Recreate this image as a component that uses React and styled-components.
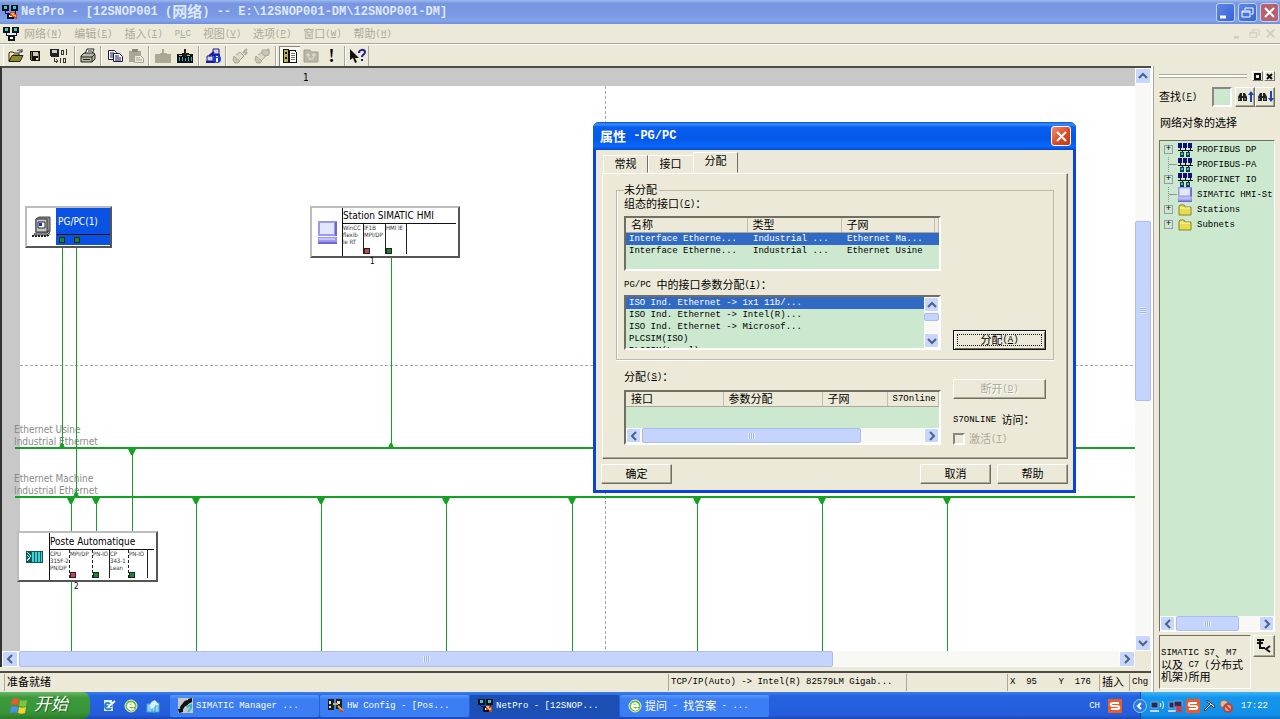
import React, { useState } from "react";
import styled, { createGlobalStyle, css } from "styled-components";

const GlobalStyle = createGlobalStyle`
  * { box-sizing: border-box; }
  body {
    margin: 0;
    overflow: hidden;
    background: #ece9d8;
    color: #000;
    font: 9px/12px "Liberation Mono", "Noto Sans CJK SC", monospace;
  }
  button, input {
    font: inherit;
    color: inherit;
    padding: 0;
    margin: 0;
    border: 0;
    border-radius: 0;
  }
  button { background: none; white-space: nowrap; }
  svg { display: block; flex: none; }
`;

/* ---------- text ---------- */
const Han = styled.span`
  font-family: "Noto Sans CJK SC", sans-serif;
  font-size: ${(p) => p.$size || 11}px;
  line-height: 8px;
  vertical-align: -2px;
`;

// Chinese runs are set larger than latin ones, "_X" underlines X
function mix(text, size) {
  return text
    .split(/([\u3000-\u9fff\uff00-\uffef]+|_.)/)
    .filter(Boolean)
    .map((part, i) => {
      if (part[0] === "_") return <u key={i}>{part[1]}</u>;
      if (/[\u3000-\u9fff\uff00-\uffef]/.test(part))
        return (
          <Han key={i} $size={size}>
            {part}
          </Han>
        );
      return part;
    });
}

/* ---------- icons ---------- */
const NetIcon = ({ size = 16, flash }) => (
  <svg width={size} height={size} viewBox="0 0 16 16" shapeRendering="crispEdges">
    <path d="M0 1h7v6H0zM9 1h7v6H9zM5 10h7v5H5z" fill="#111" />
    <path d="M2 2h3v3H2zM11 2h3v3h-3z" fill="#3cc8c8" />
    <path d="M7 11h3v2H7z" fill="#fff" />
    <path d="M3 7v2h10V7M8 9v1" stroke="#10106a" fill="none" />
    {flash && <path d="M8 8h5v2h2v5h-2l-2-2-3-1z" fill="#e04030" />}
    {flash && <path d="M9 9h3v2h2v2l-3-1z" fill="#f6c040" />}
  </svg>
);

const OpenIcon = () => (
  <svg width="16" height="16" viewBox="0 0 16 16">
    <path d="M1 13V5l1-1h3l1 1h5v2H5z" fill="#f4f08a" stroke="#222" />
    <path d="M1 13.500l3-6h11l-3 6z" fill="#8f8a28" stroke="#222" />
    <path d="M9 3c2-2 4-1 5 1m0-3v3h-3" stroke="#222" fill="none" />
  </svg>
);

const SaveIcon = () => (
  <svg width="12" height="12" viewBox="0 0 12 12" shapeRendering="crispEdges">
    <path d="M1 1h10v10H2l-1-1z" fill="#111" />
    <path d="M2 2h1v8H2zM9 3h1v7H9z" fill="#77781c" />
    <path d="M4 2h5v4H4z" fill="#c8c8b8" />
    <path d="M7 8h2v2H7z" fill="#ddd" />
  </svg>
);

const CompileIcon = () => (
  <svg width="17" height="16" viewBox="0 0 17 16" shapeRendering="crispEdges">
    <path d="M0 1h9v8H1L0 8z" fill="#222" />
    <path d="M2 2h5v3H2z" fill="#ccc" />
    <path d="M11 2h2v4h-2zM16 1v6M10 10v5M13 10h2v4h-2z" stroke="#333" fill="none" />
    <path d="M4 10v3h4M6 11l2 2-2 2" stroke="#333" fill="none" />
  </svg>
);

const PrintIcon = () => (
  <svg width="16" height="16" viewBox="0 0 16 16">
    <path d="M5 6l2-5h7l-2 5" fill="#fff" stroke="#222" />
    <path d="M1 8l3-3h10l1 2v4l-3 3H1z" fill="#b8b8a8" stroke="#222" />
    <path d="M1 9h11l3-3M12 9v5M3 11.500h7M8 3h4" stroke="#222" fill="none" />
    <path d="M7 10h3v1H7z" fill="#d8c820" />
  </svg>
);

const CopyIcon = () => (
  <svg width="16" height="16" viewBox="0 0 16 16">
    <g fill="#fff" stroke="#16164e">
      <path d="M1.500 2.500h6l2 2v7h-8zM3 5h4M3 7h4M3 9h4" />
      <path d="M6.500 5.500h6l3 3v5h-9zM8 8h4M8 10h6M8 12h6" />
    </g>
  </svg>
);

const PasteIcon = () => (
  <svg width="16" height="16" viewBox="0 0 16 16">
    <path d="M1 3h12v11H1z" fill="#aaa797" />
    <path d="M4 1h6v3H4z" fill="#8d8a7c" />
    <path d="M6.500 7.500h6l3 3v4h-9zM8 10h4M8 12h6" fill="#ece9d8" stroke="#aaa797" />
  </svg>
);

const LoadIcon = ({ dim }) => (
  <svg width="16" height="16" viewBox="0 0 16 16" shapeRendering="crispEdges">
    <path d="M0 6h16v9H0z" fill={dim ? "#aaa797" : "#101018"} />
    <path d="M7 1h2v4h3L8 9 4 5h3z" fill={dim ? "#aaa797" : "#222"} />
    {!dim && (
      <path d="M2 9v4M5 9v4M8 10v3M11 9v4M14 9v4" stroke="#2cb0b8" fill="none" />
    )}
    {!dim && <path d="M2 7h3v1H2zM10 7h3v1h-3z" fill="#c8c850" />}
  </svg>
);

const ModuleInfoIcon = () => (
  <svg width="16" height="16" viewBox="0 0 16 16">
    <path d="M8 1h6v5H8zM2 8h6v5H2z" fill="#cfd4f4" stroke="#1c1c8c" />
    <path d="M1 14h9M4 8l5-4M7 7h8" stroke="#1c1c8c" strokeWidth="2" />
    <circle cx="12" cy="11" r="4" fill="#1438e0" />
    <path d="M12 8v1M12 10v4" stroke="#fff" strokeWidth="2" />
  </svg>
);

const PlugIcon = ({ apart }) => (
  <svg width="16" height="16" viewBox="0 0 16 16" fill="none" stroke="#aaa797">
    <path d="M2 8l6 5-2 2H3l-2-3z" fill="#c9c6b6" strokeWidth="1" />
    <path d="M4 7l4-3 4 4-4 4" fill="#dcd9c9" />
    <path d="M11 5l4-4M13 7l2-3" strokeWidth="2" />
    {apart && <path d="M8 2h7v5l-4 1-3-2z" fill="#c9c6b6" />}
  </svg>
);

const CatalogIcon = () => (
  <svg width="15" height="15" viewBox="0 0 15 15" shapeRendering="crispEdges">
    <path d="M1 1h5v13H1z" fill="#b8b45a" stroke="#111" />
    <path d="M3 4h2v2H3zM3 9h2v2H3z" fill="#111" />
    <path d="M7 2h6l1 2v10H7z" fill="#fff" stroke="#111" />
    <path d="M9 5h4M9 7h4M9 9h4M9 11h4" stroke="#777" />
  </svg>
);

const DimFolderIcon = () => (
  <svg width="16" height="14" viewBox="0 0 16 14">
    <path d="M1 3V1h6l1 2h7v10H1z" fill="#bab7a7" stroke="#a19e8f" />
    <path d="M4 5h2v2H4zM10 5h2v2h-2zM6 10h4M5 8l2 2M11 8l-2 2" stroke="#e4e1d2" fill="none" />
  </svg>
);

const HelpIcon = () => (
  <svg width="17" height="16" viewBox="0 0 17 16">
    <path d="M1 1v11l3-2 2 5 2-1-2-4h4z" fill="#111" />
    <path d="M10 5c0-4 6-4 6-1 0 3-3 2-3 5m0 2v2" fill="none" stroke="#1a1a8c" strokeWidth="2" />
  </svg>
);

const ComputerIcon = () => (
  <svg width="21" height="22" viewBox="0 0 21 22">
    <path d="M5 3l3-2h11v13l-3 2H5z" fill="#8c8c8c" stroke="#444" />
    <path d="M5 3h11v13H5z" fill="#c6c6c6" stroke="#333" />
    <path d="M7 6h7v6H7z" fill="#fff" stroke="#222" />
    <path d="M8 7h3v3H8z" fill="#1c28d8" />
    <path d="M4 17h12l3-3v2l-3 3H3z" fill="#bbb" stroke="#444" />
    <path d="M1 20h15l3-2" stroke="#222" strokeWidth="2" strokeDasharray="2 1" fill="none" />
  </svg>
);

const PanelIcon = ({ small }) => (
  <svg width={small ? 14 : 19} height={small ? 15 : 23} viewBox="0 0 19 23" preserveAspectRatio="none">
    <path d="M0 0h19v15H0zM0 16h19v7H0z" fill="#9a98f0" />
    <path d="M2 2h14v11H2z" fill="#e2e8fc" />
    <path d="M1 17h16v2H1z" fill="#c4c4fa" />
    <path d="M0 21h19v2H0zM17 1h2v14h-2z" fill="#6a66d4" />
  </svg>
);

const RackIcon = () => (
  <svg width="17" height="12" viewBox="0 0 17 12" shapeRendering="crispEdges">
    <path d="M0 0h17v12H0z" fill="#10585c" />
    <path d="M6 1h2v10H6zM9 1h2v10H9zM12 1h2v10h-2zM15 1h1v10h-1z" fill="#35d4d8" />
    <path d="M1 1l4 4-4 4M1 4l3 3-3 3" stroke="#b8f0f0" fill="none" />
  </svg>
);

const SubnetIcon = () => (
  <svg width="15" height="14" viewBox="0 0 15 14" shapeRendering="crispEdges">
    <path d="M0 0h4v5H0zM5 0h4v5H5zM10 0h4v5h-4z" fill="#101078" />
    <path d="M0 7h15M2 5v2M7 5v2M12 5v2M4 7v2M10 7v2" stroke="#111" fill="none" />
    <path d="M2 9h4v5H2zM8 9h4v5H8z" fill="#123c50" />
    <path d="M3 10h2v2H3zM9 10h2v2H9z" fill="#38c8c8" />
  </svg>
);

const FolderIcon = () => (
  <svg width="14" height="12" viewBox="0 0 14 12">
    <path d="M1 11V2l1-1h4l1 2h6v8z" fill="#e6dc50" stroke="#8c8424" />
    <path d="M2 4h10" stroke="#fbf7b0" />
  </svg>
);

const FindIcon = ({ down }) => (
  <svg width="17" height="13" viewBox="0 0 17 13">
    <path d="M1 11V7l2-4h2v3h1V3h2l2 4v4H6V8H5v3z" fill="#222" />
    <path d="M2 8v2M8 8v2" stroke="#aaa" />
    <path
      d={down ? "M13 1h2v7h2l-3 4-3-4h2z" : "M13 12h2V5h2l-3-4-3 4h2z"}
      fill="#1644b4"
    />
  </svg>
);

const FlagIcon = () => (
  <svg width="18" height="18" viewBox="0 0 18 18">
    <path d="M2 3c2-2 4-2 7-1L8 8C5 7 3 7 1 8z" fill="#f0592a" />
    <path d="M10 3c2 1 4 1 7 0l-1 6c-2 1-5 1-7 0z" fill="#7cc83c" />
    <path d="M1 10c2-1 4-1 7 0l-1 6c-2-1-4-1-7 0z" fill="#4a90f0" />
    <path d="M9 10c2 1 4 1 7 0l-1 6c-2 1-5 1-7 0z" fill="#fbcf30" />
  </svg>
);

const BrowserIcon = () => (
  <svg width="14" height="14" viewBox="0 0 14 14">
    <circle cx="7" cy="7" r="6" fill="#6abf2e" stroke="#e4f4cc" />
    <path d="M10 9c-2 3-6 1-6-2s5-4 6 0H4" stroke="#fff" strokeWidth="2" fill="none" />
  </svg>
);

const EditIcon = () => (
  <svg width="14" height="14" viewBox="0 0 14 14">
    <path d="M2 1h8l1 11H2z" fill="#dff0fb" />
    <path d="M9 9c-1 2-6 2-6-2s5-4 6 0H4" fill="none" stroke="#2c84c4" strokeWidth="2" />
    <path d="M6 8l7-6" stroke="#fff" strokeWidth="2" />
  </svg>
);

const ShareIcon = () => (
  <svg width="15" height="14" viewBox="0 0 15 14">
    <path d="M1 5h8v8H1zM6 4h7v9H6z" fill="#8cd4f4" stroke="#4aa0d8" />
    <path d="M4 7c0-4 3-5 5-6l4 5H9c0 3-2 3-4 4z" fill="#d4f2fc" />
  </svg>
);

const ManagerIcon = () => (
  <svg width="15" height="15" viewBox="0 0 15 15">
    <path d="M0 0h15v15H0z" fill="#c4c8cc" />
    <path d="M2 10c0-3 2-3 3-5s3-3 5-3 1 5-2 6-2 4-4 4z" fill="#111" />
    <path d="M0 11l5-1v4l-4 1zM10 1l4-1v4l-4 2z" fill="#111" />
    <path d="M9 9l4-2v3l-3 4" fill="none" stroke="#30b8c8" strokeWidth="2" />
  </svg>
);

const ConfigIcon = () => (
  <svg width="16" height="15" viewBox="0 0 16 15">
    <path d="M0 1h6v11H0zM8 1h6v10H8z" fill="#1c1c1c" />
    <path d="M1 3h2v3H1zM1 8h2v2H1zM9 3h3v3H9z" fill="#e0e0d0" />
    <path d="M5 6h5M10 8l5 5" stroke="#d8b430" strokeWidth="2" />
    <path d="M12 12l3 2" stroke="#c84028" strokeWidth="2" />
  </svg>
);

const SogouIcon = () => (
  <svg width="14" height="14" viewBox="0 0 14 14">
    <path d="M0 0h14v14H0z" fill="#f05a28" />
    <path d="M11 4H5c-3 0-3 3 0 3h4c3 0 3 3 0 3H3" stroke="#fff" strokeWidth="2" fill="none" />
  </svg>
);

const LanIcon = ({ off }) => (
  <svg width="15" height="14" viewBox="0 0 15 14">
    <path d="M1 3h7v6H1z" fill="#1c2c5c" stroke="#8ca4d4" />
    <path d="M0 11h9v2H0z" fill="#c8d4e8" />
    {off ? (
      <>
        <path d="M6 2h8v6H6z" fill="#26305c" stroke="#8ca4d4" />
        <path d="M8 7l6 6M14 7l-6 6" stroke="#e83030" strokeWidth="2" />
      </>
    ) : (
      <path d="M10 4c1 1 1 3 0 4M12 2c2 2 2 6 0 8" stroke="#fff" fill="none" />
    )}
  </svg>
);

const HammerIcon = () => (
  <svg width="13" height="13" viewBox="0 0 13 13">
    <path d="M4 1l8 6-1 2-3-3-6 6-1-1 6-6-3-2z" fill="#eef2f8" stroke="#2a3448" />
  </svg>
);

const MutedIcon = () => (
  <svg width="14" height="14" viewBox="0 0 14 14">
    <circle cx="5" cy="5" r="4" fill="#c8c0b0" stroke="#8a6a5a" />
    <circle cx="9" cy="9" r="4" fill="#d8b0a0" stroke="#c84030" strokeWidth="2" />
    <path d="M6 6l6 6" stroke="#c84030" strokeWidth="2" />
  </svg>
);

const arrows = {
  left: "M7 1L3 5l4 4",
  right: "M3 1l4 4-4 4",
  up: "M1 7l4-4 4 4",
  down: "M1 3l4 4 4-4",
};
const Arrow = ({ dir }) => (
  <svg width="10" height="10" viewBox="0 0 10 10">
    <path d={arrows[dir]} fill="none" stroke="#4d6185" strokeWidth="2" />
  </svg>
);

const WindowGlyph = ({ kind, size = 13 }) => (
  <svg width={size} height={size} viewBox="0 0 13 13" fill="none" stroke="currentColor" strokeWidth="2">
    {kind === "min" && <path d="M1 11h6" strokeWidth="3" />}
    {kind === "restore" && (
      <path d="M4 4V2h8v6h-2M1 5h8v6H1zM1 6h8" strokeWidth="1" />
    )}
    {kind === "close" && <path d="M2 2l9 9M11 2l-9 9" />}
  </svg>
);

/* ---------- window frame ---------- */
const Desktop = styled.div`
  position: relative;
  display: flex;
  flex-direction: column;
  height: 100vh;
`;

const TitleBar = styled.header`
  display: flex;
  align-items: center;
  gap: 3px;
  height: 24px;
  padding: 0 1px 0 2px;
  color: #dfe8ff;
  background: linear-gradient(#9db9ee, #7795e0 15%, #7a98e4 60%, #82a5ea 85%, #6f8ddb);
`;
const TitleText = styled.h1`
  flex: 1;
  margin: 0;
  font-size: 12px;
  line-height: 16px;
  white-space: pre;
`;
const CaptionButton = styled.button`
  display: flex;
  align-items: center;
  justify-content: center;
  width: 19px;
  height: 19px;
  border: 1px solid #c4d2f6;
  border-radius: 3px;
  color: #fff;
  background: ${(p) => (p.$close ? "#b5616e" : "linear-gradient(135deg, #5d86e8, #3564d8)")};
`;

const MenuBar = styled.nav`
  display: flex;
  align-items: center;
  height: 20px;
  padding: 0 4px 0 3px;
  border-bottom: 1px solid #aca899;
  color: #aca899;
`;
const MenuItem = styled.button`
  margin-left: ${(p) => (p.$first ? 5 : 12)}px;
`;
const ChildButtons = styled.div`
  display: flex;
  gap: 5px;
  margin-left: auto;
  color: #cfccbd;
`;
const PlainButton = styled.button`
  display: flex;
`;

const ToolBar = styled.div`
  display: flex;
  align-items: center;
  height: 22px;
  padding-left: 3px;
  border-top: 1px solid #fff;
`;
const ToolGroup = styled.div`
  display: flex;
  align-items: center;
  height: 20px;
  padding: 0 2px;
  border-left: 1px solid #fff;
  border-right: 1px solid #aca899;
`;
const ToolButton = styled.button`
  display: flex;
  align-items: center;
  justify-content: center;
  width: ${(p) => p.$w || 21}px;
  height: 20px;
  font: bold 18px/20px "Liberation Serif", serif;
  ${(p) =>
    p.$pressed &&
    css`
      background: #f8f7f0;
      box-shadow: inset 1px 1px #8a8776;
    `}
`;

const Main = styled.div`
  flex: 1;
  display: flex;
  min-height: 0;
`;
const Editor = styled.main`
  flex: 1;
  display: flex;
  flex-direction: column;
  min-width: 0;
`;
const View = styled.div`
  flex: 1;
  display: flex;
  min-height: 0;
  border-top: 2px solid #4c4c48;
  border-left: 2px solid #333;
`;
const ViewColumn = styled.div`
  flex: ${(p) => (p.$narrow ? "none" : 1)};
  display: flex;
  flex-direction: column;
  min-width: 0;
`;
const Corner = styled.div`
  flex: none;
  width: 16px;
  height: 16px;
`;

/* ---------- scroll bars ---------- */
const Bar = styled.div`
  display: flex;
  flex: ${(p) => (p.$stretch ? 1 : "none")};
  flex-direction: ${(p) => (p.$vertical ? "column" : "row")};
  ${(p) => (p.$vertical ? "width" : "height")}: ${(p) => p.$thick}px;
  background: #f8f8f4;
`;
const BarButton = styled.button`
  display: flex;
  flex: none;
  align-items: center;
  justify-content: center;
  width: ${(p) => p.$thick}px;
  height: ${(p) => p.$thick}px;
  border: 1px solid #fff;
  border-radius: 2px;
  background: #c6d6fc;
`;
const Space = styled.div`
  flex: ${(p) => p.$grow} 1 0px;
`;
const Thumb = styled.div`
  flex: ${(p) => p.$grow} 1 0px;
  display: flex;
  align-items: center;
  justify-content: center;
  border: 1px solid #a9bdf0;
  border-radius: 2px;
  background: #c5d4fc;
`;
const Grip = styled.span`
  width: ${(p) => (p.$vertical ? 6 : 7)}px;
  height: ${(p) => (p.$vertical ? 7 : 6)}px;
  background: repeating-linear-gradient(
    ${(p) => (p.$vertical ? "180deg" : "90deg")},
    #e8effe 0 1px,
    #9fb4ec 1px 2px
  );
`;

function ScrollBar({ vertical, stretch, thick = 16, parts, grip = true }) {
  return (
    <Bar $vertical={vertical} $stretch={stretch} $thick={thick}>
      <BarButton $thick={thick} aria-label="back">
        <Arrow dir={vertical ? "up" : "left"} />
      </BarButton>
      <Space $grow={parts[0]} />
      <Thumb $grow={parts[1]}>{grip && <Grip $vertical={vertical} />}</Thumb>
      <Space $grow={parts[2]} />
      <BarButton $thick={thick} aria-label="forward">
        <Arrow dir={vertical ? "down" : "right"} />
      </BarButton>
    </Bar>
  );
}

/* ---------- network canvas ---------- */
const Canvas = styled.div`
  position: relative;
  flex: 1;
  overflow: hidden;
  background: #c8c8c8;
  font-family: "DejaVu Sans Condensed", "DejaVu Sans", sans-serif;
`;
const Wires = styled.svg`
  position: absolute;
  inset: 0;
  width: 100%;
  height: 100%;
`;
const Placed = styled.div`
  position: absolute;
  left: ${(p) => p.$x}px;
  top: ${(p) => p.$y}px;
`;
const BusName = styled(Placed)`
  color: #8a8a8a;
  font-size: 10px;
  line-height: 12px;
  white-space: pre;
`;
const Mark = styled(Placed)`
  font-size: ${(p) => p.$size || 8}px;
  line-height: 12px;
`;
const Station = styled(Placed)`
  display: flex;
  width: ${(p) => p.$w}px;
  height: ${(p) => p.$h}px;
  border: 2px solid;
  border-color: #bdbdbd #555 #555 #bdbdbd;
  background: #fff;
`;
const StationIcon = styled.div`
  display: flex;
  align-items: center;
  justify-content: center;
  width: ${(p) => p.$w}px;
`;
const StationBody = styled.div`
  flex: 1;
  display: flex;
  flex-direction: column;
  border-left: 1px solid #111;
  padding-right: 2px;
  ${(p) =>
    p.$selected &&
    css`
      color: #fff;
      background: #0a52e4;
      border-color: #0a52e4;
      margin-bottom: 1px;
      padding: 0;
    `}
`;
const StationName = styled.div`
  height: ${(p) => p.$h}px;
  padding-left: ${(p) => p.$pad || 0}px;
  border-bottom: 1px solid #111;
  font-size: 10px;
  line-height: ${(p) => p.$h}px;
  white-space: nowrap;
`;
const Modules = styled.div`
  flex: 1;
  display: flex;
`;
const Module = styled.div`
  display: flex;
  flex-direction: column;
  justify-content: space-between;
  width: ${(p) => p.$w}px;
  margin-bottom: 2px;
  border-right: 1px ${(p) => (p.$dashed ? "dashed" : "solid")} #222;
  color: #333;
  font-size: 6px;
  line-height: 7px;
  white-space: pre;
`;
const Port = styled.i`
  width: 6px;
  height: 6px;
  border: 1px solid #222;
  background: ${(p) => p.$color};
`;
const PortRow = styled.div`
  display: flex;
  gap: 9px;
  padding: 2px 0 0 2px;
`;

const RED = "#d04050";
const GREEN = "#128a28";
const WIRE = "#16a026";
const drops = [194, 319, 444, 570, 695, 820, 945];

const down = (x, y) => `M${x - 4} ${y}h8l-3 6h-2z`;
const up = (x, y) => `M${x - 3} ${y}h6l-2-5h-2z`;

function Network() {
  return (
    <Canvas>
      <Wires>
        <rect x="18" y="18" width="100%" height="100%" fill="#fff" />
        <g stroke="#a8a8a8" strokeDasharray="3 2" shapeRendering="crispEdges">
          <line x1="603" x2="603" y1="18" y2="100%" />
          <line x1="18" x2="100%" y1="297" y2="297" />
        </g>
      </Wires>
      <BusName $x={12} $y={356}>{"Ethernet Usine\nIndustrial Ethernet"}</BusName>
      <BusName $x={12} $y={405}>{"Ethernet Machine\nIndustrial Ethernet"}</BusName>
      <Wires>
        <g stroke={WIRE} shapeRendering="crispEdges">
          <line x1="13" x2="100%" y1="380" y2="380" strokeWidth="2" />
          <line x1="13" x2="100%" y1="429" y2="429" strokeWidth="2" />
          <path d="M60 179v201M74 179v250M389 188v192M130 380v84M69 429v35M94 429v35" fill="none" />
          <line x1="69" x2="69" y1="513" y2="100%" />
          {drops.map((x) => (
            <line key={x} x1={x} x2={x} y1="429" y2="100%" />
          ))}
        </g>
        <path d={[60, 389].map((x) => up(x, 380)).join("") + up(74, 429)} fill={WIRE} />
        <path d={down(130, 381) + [69, 94, ...drops].map((x) => down(x, 430)).join("")} fill={WIRE} />
      </Wires>
      <Mark $x={301} $y={4} $size={10}>1</Mark>

      <Station $x={23} $y={138} $w={87} $h={42}>
        <StationIcon $w={29}>
          <ComputerIcon />
        </StationIcon>
        <StationBody $selected>
          <StationName $h={27} $pad={1}>PG/PC(1)</StationName>
          <PortRow>
            <Port $color={GREEN} />
            <Port $color={GREEN} />
          </PortRow>
        </StationBody>
      </Station>

      <Station $x={308} $y={138} $w={150} $h={52}>
        <StationIcon $w={30}>
          <PanelIcon />
        </StationIcon>
        <StationBody>
          <StationName $h={16}>Station SIMATIC HMI</StationName>
          <Modules>
            <Module $w={21}>{"WinCC\nflexib\nle RT"}</Module>
            <Module $w={22}>
              {"IF1B\nMPI/DP"}
              <Port $color={RED} />
            </Module>
            <Module $w={21}>
              HMI IE
              <Port $color={GREEN} />
            </Module>
          </Modules>
        </StationBody>
      </Station>
      <Mark $x={368} $y={188}>1</Mark>

      <Station $x={15} $y={463} $w={141} $h={51}>
        <StationIcon $w={30}>
          <RackIcon />
        </StationIcon>
        <StationBody>
          <StationName $h={17}>Poste Automatique</StationName>
          <Modules>
            <Module $w={20} $dashed>{"CPU\n315F-2\nPN/DP"}</Module>
            <Module $w={23} $dashed>
              MPI/DP
              <Port $color={RED} />
            </Module>
            <Module $w={17}>
              PN-IO
              <Port $color={GREEN} />
            </Module>
            <Module $w={19} $dashed>{"CP\n343-1\nLean"}</Module>
            <Module $w={19}>
              PN-IO
              <Port $color={GREEN} />
            </Module>
          </Modules>
        </StationBody>
      </Station>
      <Mark $x={72} $y={513}>2</Mark>
    </Canvas>
  );
}

/* ---------- catalog ---------- */
const Catalog = styled.aside`
  display: flex;
  flex-direction: column;
  width: 129px;
  padding: 5px 5px 3px 6px;
  border-left: 2px solid #fff;
  box-shadow: inset 1px 0 #aca899;
`;
const Gripper = styled.div`
  display: flex;
  align-items: center;
  gap: 1px;
  height: 10px;
`;
const Ridge = styled.div`
  flex: 1;
  height: 4px;
  margin-right: 4px;
  border-top: 1px solid #aca899;
  border-bottom: 1px solid #aca899;
  background: #fff;
`;
const TinyButton = styled.button`
  display: flex;
  align-items: center;
  justify-content: center;
  width: 11px;
  height: 10px;
  border: 1px solid;
  border-color: #fff #777 #777 #fff;
`;
const FindRow = styled.div`
  display: flex;
  align-items: center;
  margin-top: 5px;
  height: 21px;
`;
const FindInput = styled.input`
  width: 20px;
  height: 20px;
  margin: 0 3px 0 auto;
  border: 2px solid;
  border-color: #888 #fff #fff #888;
  background: #cce8cf;
`;
const raised = css`
  border: 1px solid;
  border-color: #fff #716f64 #716f64 #fff;
  box-shadow: inset -1px -1px #aca899;
`;
const FindButton = styled.button`
  display: flex;
  align-items: center;
  justify-content: center;
  width: 20px;
  height: 20px;
  ${raised}
`;
const CatalogLabel = styled.div`
  padding: 10px 1px 11px;
`;
const TreeBox = styled.div`
  flex: 1;
  display: flex;
  flex-direction: column;
  border: 1px solid;
  border-color: #716f64 #fff #fff #716f64;
  background: #cce8cf;
`;
const Tree = styled.ul`
  flex: 1;
  margin: 0;
  padding: 1px 0 0 4px;
  list-style: none;
`;
const TreeItem = styled.li`
  display: grid;
  grid-template-columns: 14px 19px auto;
  align-items: center;
  height: 15px;
  white-space: nowrap;
`;
const Expander = styled.button`
  width: 9px;
  height: 9px;
  border: 1px solid #99a;
  font-size: 9px;
  line-height: 7px;
`;
const Branch = styled.span`
  height: 15px;
  margin-left: 4px;
  border-left: 1px dotted #8a9a8c;
  background: linear-gradient(#8a9a8c, #8a9a8c) 0 7px / 8px 1px no-repeat;
`;
const InfoRow = styled.div`
  display: flex;
  align-items: flex-start;
  gap: 2px;
  margin-top: 3px;
`;
const InfoBox = styled.div`
  flex: 1;
  height: 54px;
  padding: 11px 1px 0;
  border: 1px solid;
  border-color: #716f64 #fff #fff #716f64;
  white-space: pre;
`;
const HelpButton = styled.button`
  width: 22px;
  height: 22px;
  ${raised}
`;

const treeItems = [
  { name: "PROFIBUS DP", icon: <SubnetIcon />, open: true },
  { name: "PROFIBUS-PA", icon: <SubnetIcon /> },
  { name: "PROFINET IO", icon: <SubnetIcon />, open: true },
  { name: "SIMATIC HMI-St", icon: <PanelIcon small /> },
  { name: "Stations", icon: <FolderIcon />, open: true },
  { name: "Subnets", icon: <FolderIcon />, open: true },
];

function CatalogPane() {
  return (
    <Catalog>
      <Gripper>
        <Ridge />
        <TinyButton aria-label="dock">
          <svg width="7" height="7" viewBox="0 0 7 7">
            <path d="M1 1h5v5H1z" fill="none" stroke="#111" strokeWidth="2" />
          </svg>
        </TinyButton>
        <TinyButton aria-label="close">
          <svg width="7" height="7" viewBox="0 0 7 7">
            <path d="M1 1l5 5M6 1L1 6" stroke="#111" strokeWidth="2" />
          </svg>
        </TinyButton>
      </Gripper>
      <FindRow>
        <label htmlFor="find">{mix("查找(_F)")}</label>
        <FindInput id="find" />
        <FindButton aria-label="find previous">
          <FindIcon />
        </FindButton>
        <FindButton aria-label="find next">
          <FindIcon down />
        </FindButton>
      </FindRow>
      <CatalogLabel>{mix("网络对象的选择")}</CatalogLabel>
      <TreeBox>
        <Tree>
          {treeItems.map((item) => (
            <TreeItem key={item.name}>
              {item.open ? <Expander>+</Expander> : <Branch />}
              {item.icon}
              <span>{item.name}</span>
            </TreeItem>
          ))}
        </Tree>
        <ScrollBar thick={15} parts={[1, 63, 20]} />
      </TreeBox>
      <InfoRow>
        <InfoBox>{mix("SIMATIC S7、M7\n以及 C7 (分布式\n机架)所用")}</InfoBox>
        <HelpButton aria-label="insert">
          <svg width="18" height="18" viewBox="0 0 18 18">
            <path d="M3 3h7M3 6h6M6 2v9h5M16 9l-4 3 4 3" fill="none" stroke="#111" strokeWidth="2" />
          </svg>
        </HelpButton>
      </InfoRow>
    </Catalog>
  );
}

/* ---------- status bar ---------- */
const StatusBar = styled.footer`
  display: flex;
  align-items: center;
  height: 21px;
  margin-top: 4px;
  padding-left: 4px;
  border-top: 2px solid #4c4c48;
`;
const StatusCell = styled.div`
  flex: ${(p) => (p.$w ? "none" : 1)};
  width: ${(p) => (p.$w ? p.$w + "px" : "auto")};
  height: 17px;
  padding-left: 2px;
  border-left: 1px solid #aca899;
  line-height: 17px;
  white-space: pre;
`;

/* ---------- properties dialog ---------- */
const Dialog = styled.section`
  position: absolute;
  left: 593px;
  top: 122px;
  width: 483px;
  border: solid #0a43dc;
  border-width: 0 3px 3px;
  border-radius: 6px 6px 0 0;
  background: #ece9d8;
`;
const DialogTitle = styled.header`
  display: flex;
  align-items: center;
  justify-content: space-between;
  height: 28px;
  margin: 0 -3px;
  padding: 0 5px 0 7px;
  border-radius: 6px 6px 0 0;
  color: #fff;
  font-size: 12px;
  font-weight: bold;
  background: linear-gradient(#0a4fd8, #3a90fc 8%, #0a5ef0 18%, #0458e8 60%, #0868fc 88%, #0446cc);
`;
const DialogClose = styled.button`
  display: flex;
  align-items: center;
  justify-content: center;
  width: 20px;
  height: 20px;
  border: 1px solid #fff;
  border-radius: 3px;
  background: linear-gradient(135deg, #f09070, #dc4420 60%, #c03818);
`;
const Tabs = styled.div`
  display: flex;
  align-items: flex-end;
  height: 23px;
  padding-left: 7px;
`;
const Tab = styled.button`
  width: 45px;
  height: ${(p) => (p.$active ? 21 : 18)}px;
  padding-bottom: ${(p) => (p.$active ? 3 : 0)}px;
  border: 1px solid;
  border-color: #fff ${(p) => (p.$edge ? "#716f64" : "transparent")} transparent #fff;
`;
const TabPanel = styled.div`
  margin: 0 5px 0 6px;
  padding: 10px 13px 13px;
  border: 1px solid;
  border-color: #fff #716f64 #716f64 #fff;
  box-shadow: inset -1px -1px #aca899;
`;
const Group = styled.fieldset`
  min-width: 0;
  margin: 0;
  padding: 2px 7px 9px;
  border: 1px solid #bdb9a8;
  box-shadow: inset 1px 0 #fff, 0 1px #fff;
`;
const Legend = styled.legend`
  padding: 0 2px 0 0;
  line-height: 12px;
`;
const Columns = styled.div`
  display: flex;
  gap: 12px;
`;
const ListColumn = styled.div`
  flex: 1;
  min-width: 0;
`;
const SideColumn = styled.div`
  display: flex;
  flex-direction: column;
  justify-content: flex-end;
  width: 93px;
`;
const Label = styled.div`
  height: ${(p) => p.$h || 12}px;
  line-height: 12px;
`;
const ListBox = styled.div`
  display: flex;
  flex-direction: column;
  height: 55px;
  border: 2px solid;
  border-color: #716f64 #fff #fff #716f64;
  background: #cce8cf;
  overflow: hidden;
`;
const Table = styled.table`
  width: 100%;
  table-layout: fixed;
  border-collapse: collapse;
`;
const Th = styled.th`
  width: ${(p) => (p.$w ? p.$w + "px" : "auto")};
  height: 14px;
  padding: 0 0 0 5px;
  border-right: 1px solid #c2beac;
  border-bottom: 1px solid #aca899;
  background: #ece9d8;
  font-weight: normal;
  line-height: 12px;
  text-align: left;
  white-space: nowrap;
`;
const Tr = styled.tr`
  color: ${(p) => (p.$selected ? "#fff" : "#000")};
  background: ${(p) => (p.$selected ? "#316ac5" : "none")};
`;
const Td = styled.td`
  height: 12px;
  padding: 0 0 0 ${(p) => (p.$first ? 3 : 6)}px;
  line-height: 12px;
  white-space: nowrap;
`;
const Fill = styled.div`
  flex: 1;
`;
const ParamBox = styled(ListBox)`
  flex-direction: row;
`;
const Options = styled.ul`
  flex: 1;
  margin: 0;
  padding: 0;
  list-style: none;
`;
const Option = styled.li`
  height: 12px;
  padding-left: 3px;
  line-height: 12px;
  color: ${(p) => (p.$selected ? "#fff" : "#000")};
  background: ${(p) => (p.$selected ? "#316ac5" : "none")};
  cursor: default;
`;
const Button = styled.button`
  width: ${(p) => p.$w || 71}px;
  height: 20px;
  ${raised}
  ${(p) =>
    p.$focus &&
    css`
      border-color: #111;
      outline: 1px dotted #111;
      outline-offset: -5px;
      box-shadow: inset 1px 1px #fff, inset -1px -1px #716f64;
    `}
  &:disabled {
    color: #aca899;
    text-shadow: 1px 1px #fff;
  }
`;
const AssignedColumn = styled(ListColumn)`
  padding: 11px 0 0 8px;
`;
const OnlineColumn = styled(SideColumn)`
  width: 101px;
  padding-right: 8px;
`;
const Online = styled.div`
  height: 34px;
  padding-top: 15px;
`;
const CheckLabel = styled.label`
  display: flex;
  align-items: center;
  gap: 4px;
  height: 12px;
  color: #aca899;
`;
const Check = styled.input`
  appearance: none;
  width: 12px;
  height: 12px;
  border: 2px solid;
  border-color: #8a8776 #fff #fff #8a8776;
`;
const DialogButtons = styled.div`
  display: flex;
  gap: 6px;
  padding: 5px 5px 6px;
`;

const interfaces = [
  ["Interface Etherne...", "Industrial ...", "Ethernet Ma..."],
  ["Interface Etherne...", "Industrial ...", "Ethernet Usine"],
];
const params = [
  "ISO Ind. Ethernet -> 1x1 11b/...",
  "ISO Ind. Ethernet -> Intel(R)...",
  "ISO Ind. Ethernet -> Microsof...",
  "PLCSIM(ISO)",
  "PLCSIM(Local)",
];

function PropertiesDialog() {
  const [row, setRow] = useState(0);
  const [param, setParam] = useState(0);
  return (
    <Dialog role="dialog" aria-label="PG/PC">
      <DialogTitle>
        <span>{mix("属性 -PG/PC", 13)}</span>
        <DialogClose aria-label="close">
          <WindowGlyph kind="close" />
        </DialogClose>
      </DialogTitle>
      <Tabs>
        <Tab $edge>{mix("常规")}</Tab>
        <Tab>{mix("接口")}</Tab>
        <Tab $active $edge>{mix("分配")}</Tab>
      </Tabs>
      <TabPanel>
        <Group>
          <Legend>{mix("未分配")}</Legend>
          <Columns>
            <ListColumn>
              <Label $h={18}>{mix("组态的接口(_C)：")}</Label>
              <ListBox>
                <Table>
                  <thead>
                    <tr>
                      <Th $w={121}>{mix("名称")}</Th>
                      <Th $w={94}>{mix("类型")}</Th>
                      <Th $w={93}>{mix("子网")}</Th>
                      <Th />
                    </tr>
                  </thead>
                  <tbody>
                    {interfaces.map((cells, i) => (
                      <Tr key={i} $selected={i === row} onClick={() => setRow(i)}>
                        {cells.map((c, n) => (
                          <Td key={n} $first={n === 0}>
                            {c}
                          </Td>
                        ))}
                        <Td />
                      </Tr>
                    ))}
                  </tbody>
                </Table>
              </ListBox>
              <Label $h={8} />
              <Label $h={16}>{mix("PG/PC 中的接口参数分配(_I)：")}</Label>
              <ParamBox>
                <Options>
                  {params.map((p, i) => (
                    <Option key={p} $selected={i === param} onClick={() => setParam(i)}>
                      {p}
                    </Option>
                  ))}
                </Options>
                <ScrollBar vertical thick={15} parts={[1, 7, 14]} grip={false} />
              </ParamBox>
            </ListColumn>
            <SideColumn>
              <Button $w={93} $focus>{mix("分配(_A)")}</Button>
            </SideColumn>
          </Columns>
        </Group>
        <Columns>
          <AssignedColumn>
            <Label $h={19}>{mix("分配(_S)：")}</Label>
            <ListBox>
              <Table>
                <thead>
                  <tr>
                    <Th $w={97}>{mix("接口")}</Th>
                    <Th $w={99}>{mix("参数分配")}</Th>
                    <Th $w={65}>{mix("子网")}</Th>
                    <Th>S7Online</Th>
                  </tr>
                </thead>
              </Table>
              <Fill />
              <ScrollBar thick={15} parts={[1, 218, 63]} />
            </ListBox>
          </AssignedColumn>
          <OnlineColumn>
            <Button $w={93} disabled>{mix("断开(_D)")}</Button>
            <Online>{mix("S7ONLINE 访问：")}</Online>
            <CheckLabel>
              <Check type="checkbox" disabled />
              <span>{mix("激活(_T)")}</span>
            </CheckLabel>
          </OnlineColumn>
        </Columns>
      </TabPanel>
      <DialogButtons>
        <Button>{mix("确定")}</Button>
        <Fill />
        <Button>{mix("取消")}</Button>
        <Button>{mix("帮助")}</Button>
      </DialogButtons>
    </Dialog>
  );
}

/* ---------- task bar ---------- */
const TaskBar = styled.footer`
  display: flex;
  align-items: center;
  height: 27px;
  color: #fff;
  background: linear-gradient(#3a80f0, #2663e0 15%, #245ddb 85%, #1c48b4);
`;
const Start = styled.button`
  display: flex;
  align-items: center;
  gap: 6px;
  width: 90px;
  height: 27px;
  padding-left: 10px;
  border-radius: 0 8px 8px 0;
  color: #fff;
  font-style: italic;
  text-shadow: 1px 1px #285c20;
  background: linear-gradient(#6cb868, #3c9a3c 20%, #389638 75%, #2c7a2c);
`;
const Quick = styled.div`
  display: flex;
  align-items: center;
  gap: 8px;
  width: 80px;
  padding-left: 12px;
`;
const Task = styled.button`
  display: flex;
  align-items: center;
  gap: 3px;
  width: 149px;
  height: 22px;
  margin-right: 1px;
  padding-left: 8px;
  border-radius: 2px;
  white-space: pre;
  background: ${(p) => (p.$active ? "#1c4fb4" : "linear-gradient(#5a98fa, #3b7df2 20%, #3b7df2)")};
`;
const Language = styled.div`
  display: flex;
  align-items: center;
  gap: 8px;
  margin-left: auto;
  padding-right: 18px;
`;
const Tray = styled.div`
  display: flex;
  align-items: center;
  gap: 3px;
  width: 140px;
  height: 27px;
  padding-right: 12px;
  border-left: 1px solid #1048a8;
  background: linear-gradient(#3cb4f8, #1496ec 20%, #1290e8 85%, #0c70c8);
`;
const TrayToggle = styled.button`
  display: flex;
  align-items: center;
  justify-content: center;
  width: 14px;
  height: 14px;
  margin-left: -8px;
  border: 1px solid #9cccfa;
  border-radius: 50%;
  background: #2878e8;
`;
const Clock = styled.time`
  margin-left: auto;
`;

const menus = ["网络(_N)", "编辑(_E)", "插入(_I)", "P_LC", "视图(_V)", "选项(_P)", "窗口(_W)", "帮助(_H)"];

function App() {
  return (
    <Desktop>
      <GlobalStyle />
      <TitleBar>
        <NetIcon flash />
        <TitleText>
          {mix("NetPro - [12SNOP001 (网络) -- E:\\12SNOP001-DM\\12SNOP001-DM]", 15)}
        </TitleText>
        <CaptionButton aria-label="minimize">
          <WindowGlyph kind="min" />
        </CaptionButton>
        <CaptionButton aria-label="restore">
          <WindowGlyph kind="restore" />
        </CaptionButton>
        <CaptionButton $close aria-label="close">
          <WindowGlyph kind="close" />
        </CaptionButton>
      </TitleBar>
      <MenuBar>
        <NetIcon />
        {menus.map((m, i) => (
          <MenuItem key={m} $first={i === 0}>
            {mix(m)}
          </MenuItem>
        ))}
        <ChildButtons>
          {["min", "restore", "close"].map((kind) => (
            <PlainButton key={kind} aria-label={kind}>
              <WindowGlyph kind={kind} size={11} />
            </PlainButton>
          ))}
        </ChildButtons>
      </MenuBar>
      <ToolBar>
        <ToolGroup>
          <ToolButton $w={20} aria-label="open"><OpenIcon /></ToolButton>
          <ToolButton $w={18} aria-label="save"><SaveIcon /></ToolButton>
          <ToolButton $w={28} aria-label="compile"><CompileIcon /></ToolButton>
        </ToolGroup>
        <ToolGroup>
          <ToolButton $w={20} aria-label="print"><PrintIcon /></ToolButton>
        </ToolGroup>
        <ToolGroup>
          <ToolButton aria-label="copy"><CopyIcon /></ToolButton>
          <ToolButton aria-label="paste"><PasteIcon /></ToolButton>
        </ToolGroup>
        <ToolGroup>
          <ToolButton aria-label="load"><LoadIcon dim /></ToolButton>
          <ToolButton $w={23} aria-label="load station"><LoadIcon /></ToolButton>
        </ToolGroup>
        <ToolGroup>
          <ToolButton aria-label="module information"><ModuleInfoIcon /></ToolButton>
        </ToolGroup>
        <ToolGroup>
          <ToolButton aria-label="connect"><PlugIcon /></ToolButton>
          <ToolButton $w={23} aria-label="disconnect"><PlugIcon apart /></ToolButton>
        </ToolGroup>
        <ToolGroup>
          <ToolButton $pressed aria-label="catalog"><CatalogIcon /></ToolButton>
          <ToolButton aria-label="view"><DimFolderIcon /></ToolButton>
          <ToolButton aria-label="check">!</ToolButton>
        </ToolGroup>
        <ToolGroup>
          <ToolButton $w={18} aria-label="help"><HelpIcon /></ToolButton>
        </ToolGroup>
      </ToolBar>
      <Main>
        <Editor>
          <View>
            <ViewColumn>
              <Network />
              <ScrollBar parts={[1, 813, 286]} />
            </ViewColumn>
            <ViewColumn $narrow>
              <ScrollBar vertical stretch parts={[138, 180, 236]} />
              <Corner />
            </ViewColumn>
          </View>
          <StatusBar>
            <StatusCell>{mix("准备就绪")}</StatusCell>
            <StatusCell $w={238}>{"TCP/IP(Auto) -> Intel(R) 82579LM Gigab..."}</StatusCell>
            <StatusCell $w={101} />
            <StatusCell $w={92}>{"X  95    Y  176"}</StatusCell>
            <StatusCell $w={30}>{mix("插入")}</StatusCell>
            <StatusCell $w={22}>Chg</StatusCell>
          </StatusBar>
        </Editor>
        <CatalogPane />
      </Main>
      <TaskBar>
        <Start>
          <FlagIcon />
          <span>{mix("开始", 17)}</span>
        </Start>
        <Quick>
          <EditIcon />
          <BrowserIcon />
          <ShareIcon />
        </Quick>
        <Task><ManagerIcon />SIMATIC Manager ...</Task>
        <Task><ConfigIcon />HW Config - [Pos...</Task>
        <Task $active><NetIcon size={15} flash />NetPro - [12SNOP...</Task>
        <Task><BrowserIcon /><span>{mix("提问 - 找答案 - ...")}</span></Task>
        <Language>
          CH
          <SogouIcon />
        </Language>
        <Tray>
          <TrayToggle aria-label="show icons">
            <svg width="8" height="8" viewBox="0 0 8 8">
              <path d="M5 1L2 4l3 3" stroke="#fff" strokeWidth="2" fill="none" />
            </svg>
          </TrayToggle>
          <LanIcon />
          <LanIcon off />
          <SogouIcon />
          <HammerIcon />
          <MutedIcon />
          <Clock>17:22</Clock>
        </Tray>
      </TaskBar>
      <PropertiesDialog />
    </Desktop>
  );
}

export default App;
